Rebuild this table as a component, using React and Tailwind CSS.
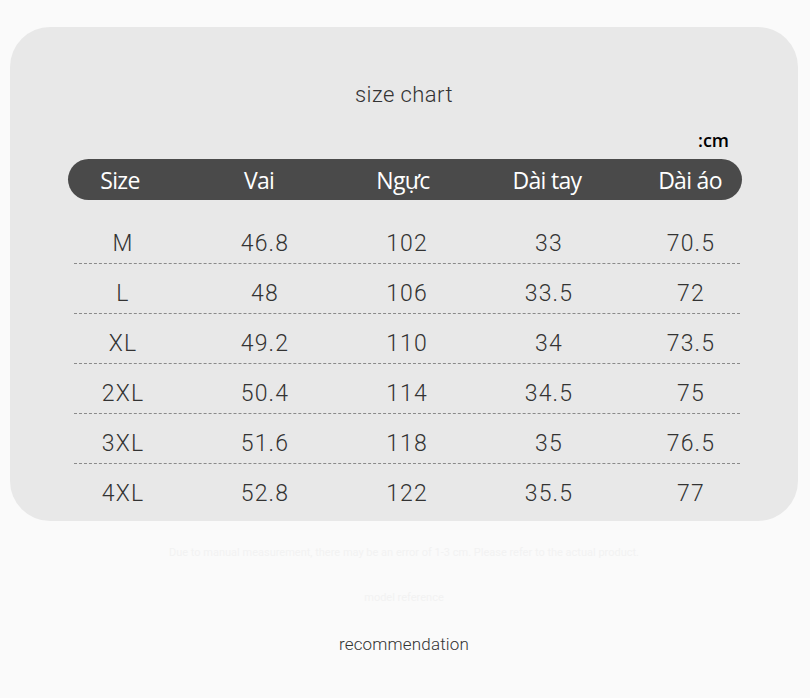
import React from "react";

const headers = ["Size", "Vai", "Ngực", "Dài tay", "Dài áo"];

const rows = [
  ["M", "46.8", "102", "33", "70.5"],
  ["L", "48", "106", "33.5", "72"],
  ["XL", "49.2", "110", "34", "73.5"],
  ["2XL", "50.4", "114", "34.5", "75"],
  ["3XL", "51.6", "118", "35", "76.5"],
  ["4XL", "52.8", "122", "35.5", "77"],
];

export default function App() {
  return (
    <div className="w-[810px] h-[698px] bg-[#fafafa] overflow-hidden pt-[27px] pl-[10px] pr-[12px]">
      {/* PANEL */}
      <div className="h-[494px] bg-[#e8e8e8] rounded-[40px] pt-[55px] flex flex-col">
        <p className="text-center text-[22px] leading-[26px] font-light tracking-[0.02em] text-[#333] font-['Roboto',sans-serif]">
          size chart
        </p>

        <div className="mt-[22px] pr-[69px] text-right text-[18px] leading-[20px] font-semibold text-black font-['Open_Sans',sans-serif]">
          :cm
        </div>

        <div className="mt-[9px] w-[710px] ml-[42px]">
          {/* HEADER */}
          <div className="ml-[16px] mr-[20px] h-[41px] rounded-full bg-[#4a4a4a] flex items-center">
            <div className="-ml-[16px] -mr-[20px] flex-1 grid grid-cols-[136px_142px_146px_142px_144px] text-white text-[23px] leading-[28px] font-['Open_Sans',sans-serif] tracking-[-0.03em]">
              {headers.map((h) => (
                <div key={h} className="text-center">
                  {h}
                </div>
              ))}
            </div>
          </div>

          {/* ROWS */}
          <div className="mt-[14px]">
            {rows.map((r, i) => (
              <div
                key={r[0]}
                className={`mx-[22px] h-[50px] ${
                  i < rows.length - 1 ? "border-b border-dashed border-[#8a8a8a]" : ""
                }`}
              >
                <div className="-mx-[22px] pt-[18px] grid grid-cols-5 text-[23px] leading-[24px] font-light tracking-[0.05em] text-[#333] font-['Roboto',sans-serif]">
                  {r.map((c, j) => (
                    <div key={j} className="text-center">
                      {c}
                    </div>
                  ))}
                </div>
              </div>
            ))}
          </div>
        </div>
      </div>

      {/* FOOTER */}
      <p className="mt-[24px] text-center text-[11px] text-[#f2f2f2] font-['Roboto',sans-serif]">
        Due to manual measurement, there may be an error of 1-3 cm. Please refer to the actual product.
      </p>
      <p className="mt-[28px] text-center text-[11px] text-[#f2f2f2] font-['Roboto',sans-serif]">
        model reference
      </p>
      <p className="mt-[28px] text-center text-[17px] leading-[20px] font-light tracking-[0.01em] text-[#333] font-['Roboto',sans-serif]">
        recommendation
      </p>
    </div>
  );
}
